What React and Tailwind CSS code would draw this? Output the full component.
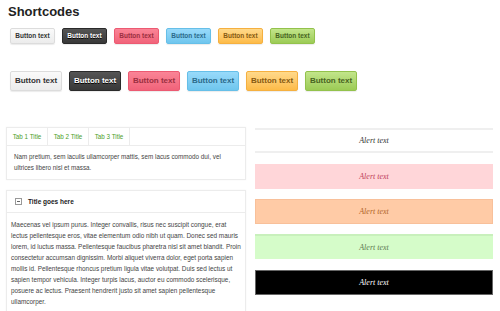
const buttons = [
  { label: 'Button text', cls: 'bg-gradient-to-b from-[#fafafa] to-[#ececec] border-[#dcdcdc] text-[#333]' },
  { label: 'Button text', cls: 'bg-gradient-to-b from-[#555] to-[#383838] border-[#2a2a2a] text-white [text-shadow:0_1px_0_#000]' },
  { label: 'Button text', cls: 'bg-gradient-to-b from-[#fa8496] to-[#f1637a] border-[#ec5a72] text-[#9b2f41]' },
  { label: 'Button text', cls: 'bg-gradient-to-b from-[#98dafa] to-[#6fc6ee] border-[#66bfe8] text-[#2b6a8a]' },
  { label: 'Button text', cls: 'bg-gradient-to-b from-[#ffd98a] to-[#fdbb47] border-[#f5b040] text-[#875a12]' },
  { label: 'Button text', cls: 'bg-gradient-to-b from-[#c2e58a] to-[#9ccb55] border-[#93c24c] text-[#48641f]' },
]

const alerts = [
  { cls: 'h-[25px] bg-white border-y-2 border-[#efefef] text-[#333]' },
  { cls: 'h-[25px] mt-[11px] bg-[#ffd6d9] text-[#c0405a]' },
  { cls: 'h-[25px] mt-[10px] bg-[#ffcba6] border border-[#f8c09a] text-[#b0652a]' },
  { cls: 'h-[25px] mt-[10px] bg-[#d5fcc9] border-t-2 border-[#c8f0bc] text-[#5f7a52]' },
  { cls: 'h-[25px] mt-[11px] bg-black border border-[#666] text-white' },
]

const sans = { fontFamily: '"Liberation Sans", Arial, sans-serif' }

export default function App() {
  return (
    <div className="w-[500px] h-[311px] overflow-hidden bg-white" style={sans}>
      <h1 className="pl-[8px] pt-[4px] text-[13px] leading-[15px] font-bold text-[#222]">Shortcodes</h1>

      <div className="flex gap-[7px] pl-[10px] mt-[9px]">
        {buttons.map((b, i) => (
          <div
            key={i}
            className={`w-[45px] h-[16px] rounded-[2px] border flex items-center justify-center text-[6.5px] font-bold shadow-[0_1px_1px_rgba(0,0,0,0.08)] ${b.cls}`}
          >
            {b.label}
          </div>
        ))}
      </div>

      <div className="flex gap-[7px] pl-[10px] mt-[27px]">
        {buttons.map((b, i) => (
          <div
            key={i}
            className={`w-[52px] h-[20px] rounded-[2px] border flex items-center justify-center text-[8px] font-bold shadow-[0_1px_1px_rgba(0,0,0,0.08)] ${b.cls}`}
          >
            {b.label}
          </div>
        ))}
      </div>

      <div className="flex mt-[36px] pl-[6px] gap-[9px]">
        <div className="w-[240px] flex flex-col gap-[10px]">
          <div className="border border-[#ececec] shadow-[0_0_2px_rgba(0,0,0,0.04)]">
            <div className="flex border-b border-[#ececec] h-[18px]">
              {['Tab 1 Title', 'Tab 2 Title', 'Tab 3 Title'].map((t) => (
                <div
                  key={t}
                  className="w-[41px] flex items-center justify-center text-[6.3px] text-[#4ea02a] border-r border-[#ececec]"
                >
                  {t}
                </div>
              ))}
            </div>
            <p className="px-[7px] pt-[6px] pb-[6px] text-[6.3px] leading-[10.5px] text-[#444]">
              Nam pretium, sem iaculis ullamcorper mattis, sem lacus commodo dui, vel ultrices libero nisl et massa.
            </p>
          </div>

          <div className="border border-[#ececec] shadow-[0_0_2px_rgba(0,0,0,0.04)]">
            <div className="flex items-center h-[22px] border-b border-[#ececec] pl-[8px] gap-[6px]">
              <div className="w-[7px] h-[7px] border border-[#999] flex items-center justify-center">
                <div className="w-[3px] h-px bg-[#666]" />
              </div>
              <span className="text-[6.5px] font-bold text-[#222]">Title goes here</span>
            </div>
            <p className="px-[4px] pt-[6px] pb-[6px] text-[6.4px] leading-[11px] text-[#444]">
              Maecenas vel ipsum purus. Integer convallis, risus nec suscipit congue, erat lectus pellentesque eros, vitae elementum odio nibh ut quam. Donec sed mauris lorem, id luctus massa. Pellentesque faucibus pharetra nisl sit amet blandit. Proin consectetur accumsan dignissim. Morbi aliquet viverra dolor, eget porta sapien mollis id. Pellentesque rhoncus pretium ligula vitae volutpat. Duis sed lectus ut sapien tempor vehicula. Integer turpis lacus, auctor eu commodo scelerisque, posuere ac lectus. Praesent hendrerit justo sit amet sapien pellentesque ullamcorper.
            </p>
          </div>
        </div>

        <div className="w-[238px] flex flex-col pt-[1px]">
          {alerts.map((a, i) => (
            <div
              key={i}
              className={`flex items-center justify-center italic text-[8px] ${a.cls}`}
              style={{ fontFamily: '"Liberation Serif", "DejaVu Serif", serif' }}
            >
              Alert text
            </div>
          ))}
        </div>
      </div>
    </div>
  )
}
